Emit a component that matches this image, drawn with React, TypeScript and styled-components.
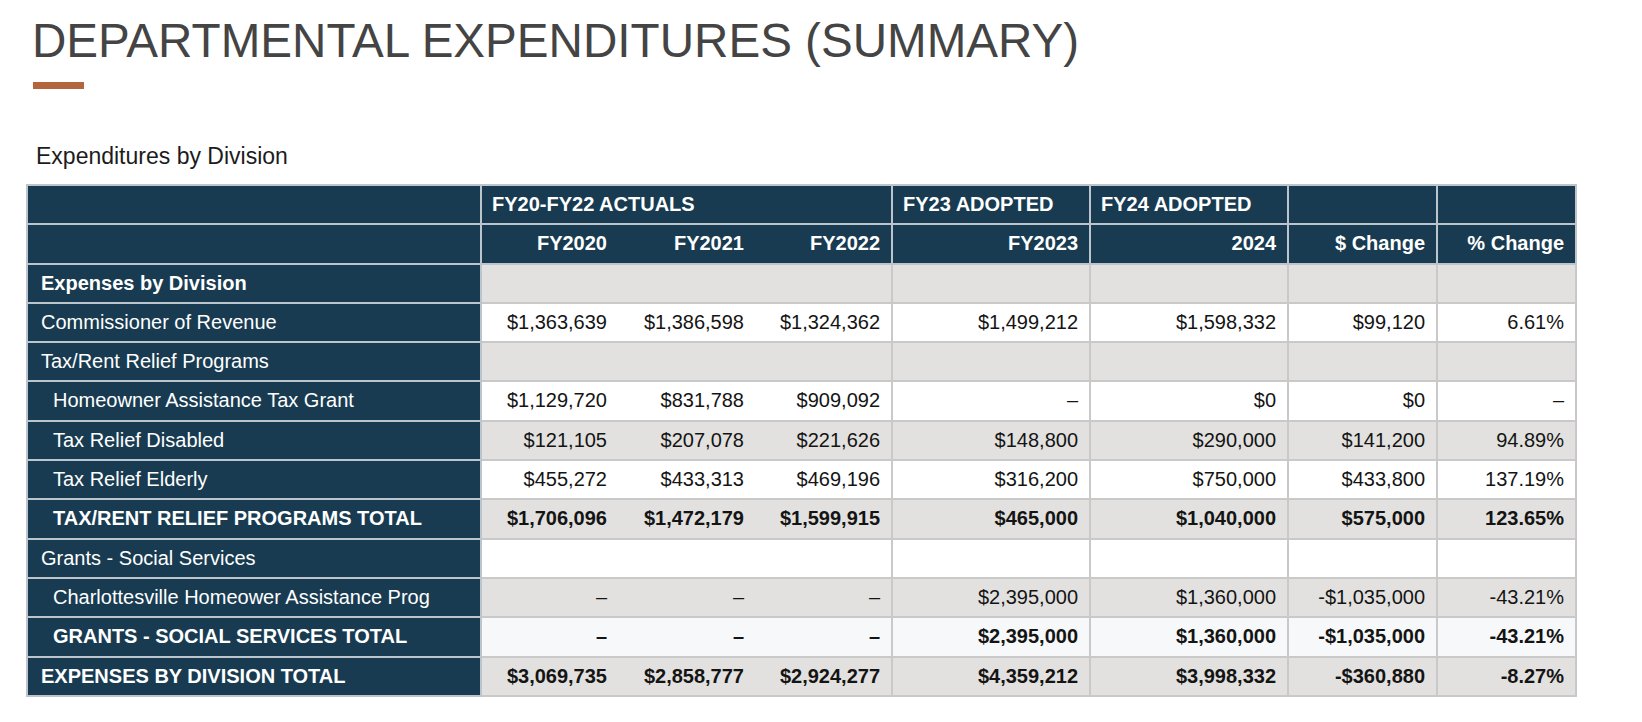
import React from 'react';
import styled, { createGlobalStyle, css } from 'styled-components';

const GlobalStyle = createGlobalStyle`
  html, body { margin: 0; padding: 0; background: #ffffff; }
  body { font-family: "Liberation Sans", Arial, Helvetica, sans-serif; }
`;

const NAVY = '#183b51';
const DATA_BORDER = '#c9c9c9';
const HEAD_BORDER = '#bcc5cb';

const Page = styled.div`
  display: flex;
  flex-direction: column;
  align-items: flex-start;
  padding: 14px 0 0 0;
`;

const Title = styled.h1`
  margin: 0 0 0 32px;
  font-size: 47.6px;
  line-height: 54px;
  font-weight: 400;
  color: #444444;
  letter-spacing: 0;
`;

const Accent = styled.div`
  margin: 14px 0 0 33px;
  width: 51px;
  height: 7px;
  background: #b3653e;
`;

const Subtitle = styled.h2`
  margin: 54px 0 0 36px;
  font-size: 23px;
  line-height: 26px;
  font-weight: 400;
  color: #1c1c1c;
`;

const Table = styled.table`
  margin: 15px 0 0 26px;
  width: 1549px;
  table-layout: fixed;
  border-collapse: collapse;
  border: 2px solid ${HEAD_BORDER};
  font-size: 20px;
`;

type Side = 'first' | 'mid' | 'last' | undefined;

const sideBorders = (side: Side) => css`
  ${side === 'first' && 'border-right: none;'}
  ${side === 'mid' && 'border-left: none; border-right: none;'}
  ${side === 'last' && 'border-left: none;'}
`;

const HeadCell = styled.th<{ $align?: 'left' | 'right'; $side?: Side }>`
  background: ${NAVY};
  color: #ffffff;
  font-weight: 700;
  text-align: ${(p) => p.$align ?? 'right'};
  padding: 7px ${(p) => (p.$align === 'left' ? '8px' : '11px')} 7px ${(p) => (p.$align === 'left' ? '10px' : '8px')};
  line-height: 23.3px;
  border: 2px solid ${HEAD_BORDER};
  white-space: nowrap;
  ${(p) => sideBorders(p.$side)}
`;

const LabelCell = styled.th<{ $bold?: boolean; $indent?: boolean }>`
  background: ${NAVY};
  color: #ffffff;
  font-weight: ${(p) => (p.$bold ? 700 : 400)};
  text-align: left;
  padding: 7px 8px 7px ${(p) => (p.$indent ? '25px' : '13px')};
  line-height: 23.3px;
  border: 2px solid ${HEAD_BORDER};
  white-space: nowrap;
`;

type Tone = 'grey' | 'white' | 'light';
const toneBg: Record<Tone, string> = {
  grey: '#e2e1df',
  white: '#ffffff',
  light: '#f6f8fa',
};

const ValueCell = styled.td<{ $tone: Tone; $bold?: boolean; $side?: Side }>`
  background: ${(p) => toneBg[p.$tone]};
  color: #141414;
  font-weight: ${(p) => (p.$bold ? 700 : 400)};
  text-align: right;
  padding: 7px 11px 7px 6px;
  line-height: 23.3px;
  border: 2px solid ${DATA_BORDER};
  white-space: nowrap;
  ${(p) => sideBorders(p.$side)}
`;

type Row = {
  label: string;
  bold?: boolean;
  indent?: boolean;
  tone: Tone;
  values: string[];
};

const EMPTY = ['', '', '', '', '', '', ''];

const rows: Row[] = [
  { label: 'Expenses by Division', bold: true, tone: 'grey', values: EMPTY },
  {
    label: 'Commissioner of Revenue',
    tone: 'white',
    values: ['$1,363,639', '$1,386,598', '$1,324,362', '$1,499,212', '$1,598,332', '$99,120', '6.61%'],
  },
  { label: 'Tax/Rent Relief Programs', tone: 'grey', values: EMPTY },
  {
    label: 'Homeowner Assistance Tax Grant',
    indent: true,
    tone: 'white',
    values: ['$1,129,720', '$831,788', '$909,092', '–', '$0', '$0', '–'],
  },
  {
    label: 'Tax Relief Disabled',
    indent: true,
    tone: 'grey',
    values: ['$121,105', '$207,078', '$221,626', '$148,800', '$290,000', '$141,200', '94.89%'],
  },
  {
    label: 'Tax Relief Elderly',
    indent: true,
    tone: 'white',
    values: ['$455,272', '$433,313', '$469,196', '$316,200', '$750,000', '$433,800', '137.19%'],
  },
  {
    label: 'TAX/RENT RELIEF PROGRAMS TOTAL',
    indent: true,
    bold: true,
    tone: 'grey',
    values: ['$1,706,096', '$1,472,179', '$1,599,915', '$465,000', '$1,040,000', '$575,000', '123.65%'],
  },
  { label: 'Grants - Social Services', tone: 'white', values: EMPTY },
  {
    label: 'Charlottesville Homeower Assistance Prog',
    indent: true,
    tone: 'grey',
    values: ['–', '–', '–', '$2,395,000', '$1,360,000', '-$1,035,000', '-43.21%'],
  },
  {
    label: 'GRANTS - SOCIAL SERVICES TOTAL',
    indent: true,
    bold: true,
    tone: 'light',
    values: ['–', '–', '–', '$2,395,000', '$1,360,000', '-$1,035,000', '-43.21%'],
  },
  {
    label: 'EXPENSES BY DIVISION TOTAL',
    bold: true,
    tone: 'grey',
    values: ['$3,069,735', '$2,858,777', '$2,924,277', '$4,359,212', '$3,998,332', '-$360,880', '-8.27%'],
  },
];

const colWidths = [454, 137, 137, 137, 198, 198, 149, 139];
const sides: Side[] = ['first', 'mid', 'last', undefined, undefined, undefined, undefined];
const yearHeads = ['FY2020', 'FY2021', 'FY2022', 'FY2023', '2024', '$ Change', '% Change'];

export default function App() {
  return (
    <>
      <GlobalStyle />
      <Page>
        <Title>DEPARTMENTAL EXPENDITURES (SUMMARY)</Title>
        <Accent />
        <Subtitle>Expenditures by Division</Subtitle>
        <Table>
          <colgroup>
            {colWidths.map((w, i) => (
              <col key={i} style={{ width: w }} />
            ))}
          </colgroup>
          <thead>
            <tr>
              <HeadCell $align="left" />
              <HeadCell $align="left" colSpan={3}>
                FY20-FY22 ACTUALS
              </HeadCell>
              <HeadCell $align="left">FY23 ADOPTED</HeadCell>
              <HeadCell $align="left">FY24 ADOPTED</HeadCell>
              <HeadCell />
              <HeadCell />
            </tr>
            <tr>
              <HeadCell $align="left" />
              {yearHeads.map((h, i) => (
                <HeadCell key={h} $side={sides[i]}>
                  {h}
                </HeadCell>
              ))}
            </tr>
          </thead>
          <tbody>
            {rows.map((r) => (
              <tr key={r.label}>
                <LabelCell scope="row" $bold={r.bold} $indent={r.indent}>
                  {r.label}
                </LabelCell>
                {r.values.map((v, i) => (
                  <ValueCell key={i} $tone={r.tone} $bold={r.bold} $side={sides[i]}>
                    {v}
                  </ValueCell>
                ))}
              </tr>
            ))}
          </tbody>
        </Table>
      </Page>
    </>
  );
}
